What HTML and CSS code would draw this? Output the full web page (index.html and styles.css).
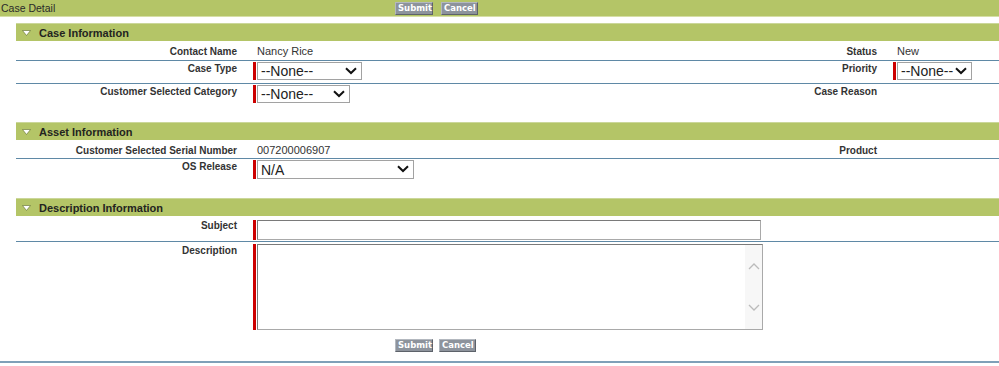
FILE: index.html
```html
<!DOCTYPE html>
<html lang="en">
<head>
    <meta charset="UTF-8">
    <title>Case Detail</title>
    <link rel="stylesheet" href="styles.css">
</head>
<body>
    <div class="topbar">
        <div class="page-title">Case Detail</div>
        <div class="buttons">
            <button class="btn" type="submit">Submit</button>
            <button class="btn" type="button">Cancel</button>
        </div>
    </div>

    <div class="content">
        <!-- Case Information -->
        <div class="section">
            <div class="sec-head">
                <svg class="twisty" width="9" height="6" viewBox="0 0 9 6"><path d="M0.5 0.5 L8.5 0.5 L4.5 5.5 Z" fill="#fff" stroke="#5d6b2a" stroke-width="0.6"/></svg>
                <span>Case Information</span>
            </div>
            <table class="detail">
                <colgroup><col class="c1"><col class="c2"><col class="c3"><col class="c4"></colgroup>
                <tr class="r-text">
                    <td class="lbl">Contact Name</td>
                    <td class="val">Nancy Rice</td>
                    <td class="lbl">Status</td>
                    <td class="val">New</td>
                </tr>
                <tr class="r-edit">
                    <td class="lbl">Case Type</td>
                    <td class="val">
                        <div class="req"><span class="bar"></span>
                            <div class="pick w-type">
                                <select><option>--None--</option></select>
                                <svg class="chev" width="12" height="8" viewBox="0 0 12 8"><path d="M1 1.2 L6 6 L11 1.2" fill="none" stroke="#111" stroke-width="2"/></svg>
                            </div>
                        </div>
                    </td>
                    <td class="lbl">Priority</td>
                    <td class="val">
                        <div class="req"><span class="bar"></span>
                            <div class="pick w-prio">
                                <select><option>--None--</option></select>
                                <svg class="chev" width="12" height="8" viewBox="0 0 12 8"><path d="M1 1.2 L6 6 L11 1.2" fill="none" stroke="#111" stroke-width="2"/></svg>
                            </div>
                        </div>
                    </td>
                </tr>
                <tr class="r-edit last">
                    <td class="lbl">Customer Selected Category</td>
                    <td class="val">
                        <div class="req"><span class="bar"></span>
                            <div class="pick w-cat">
                                <select><option>--None--</option></select>
                                <svg class="chev" width="12" height="8" viewBox="0 0 12 8"><path d="M1 1.2 L6 6 L11 1.2" fill="none" stroke="#111" stroke-width="2"/></svg>
                            </div>
                        </div>
                    </td>
                    <td class="lbl">Case Reason</td>
                    <td class="val"></td>
                </tr>
            </table>
        </div>

        <!-- Asset Information -->
        <div class="section">
            <div class="sec-head">
                <svg class="twisty" width="9" height="6" viewBox="0 0 9 6"><path d="M0.5 0.5 L8.5 0.5 L4.5 5.5 Z" fill="#fff" stroke="#5d6b2a" stroke-width="0.6"/></svg>
                <span>Asset Information</span>
            </div>
            <table class="detail">
                <colgroup><col class="c1"><col class="c2"><col class="c3"><col class="c4"></colgroup>
                <tr class="r-text short">
                    <td class="lbl">Customer Selected Serial Number</td>
                    <td class="val">007200006907</td>
                    <td class="lbl">Product</td>
                    <td class="val"></td>
                </tr>
                <tr class="r-edit last">
                    <td class="lbl">OS Release</td>
                    <td class="val">
                        <div class="req"><span class="bar"></span>
                            <div class="pick w-os">
                                <select><option>N/A</option></select>
                                <svg class="chev" width="12" height="8" viewBox="0 0 12 8"><path d="M1 1.2 L6 6 L11 1.2" fill="none" stroke="#111" stroke-width="2"/></svg>
                            </div>
                        </div>
                    </td>
                    <td class="lbl"></td>
                    <td class="val"></td>
                </tr>
            </table>
        </div>

        <!-- Description Information -->
        <div class="section">
            <div class="sec-head">
                <svg class="twisty" width="9" height="6" viewBox="0 0 9 6"><path d="M0.5 0.5 L8.5 0.5 L4.5 5.5 Z" fill="#fff" stroke="#5d6b2a" stroke-width="0.6"/></svg>
                <span>Description Information</span>
            </div>
            <table class="detail">
                <colgroup><col class="c1"><col class="c2"><col class="c3"><col class="c4"></colgroup>
                <tr class="r-subject">
                    <td class="lbl">Subject</td>
                    <td class="val" colspan="3">
                        <div class="req"><span class="bar"></span>
                            <input class="subject" type="text">
                        </div>
                    </td>
                </tr>
                <tr class="r-desc last">
                    <td class="lbl">Description</td>
                    <td class="val" colspan="3">
                        <div class="req"><span class="bar"></span>
                            <div class="area">
                                <textarea></textarea>
                                <div class="track">
                                    <svg width="12" height="8" viewBox="0 0 12 8"><path d="M1 7 L6 2 L11 7" fill="none" stroke="#bbb" stroke-width="1.3"/></svg>
                                    <svg width="12" height="8" viewBox="0 0 12 8"><path d="M1 1 L6 6 L11 1" fill="none" stroke="#bbb" stroke-width="1.3"/></svg>
                                </div>
                            </div>
                        </div>
                    </td>
                </tr>
            </table>
        </div>
    </div>

    <div class="bottombar">
        <div></div>
        <div class="buttons">
            <button class="btn" type="submit">Submit</button>
            <button class="btn" type="button">Cancel</button>
        </div>
    </div>
</body>
</html>
```

FILE: styles.css
```css
body {
    margin: 0;
    font-family: "Liberation Sans", Arial, sans-serif;
    color: #222;
    background: #fff;
}

/* header bar with title and buttons */
.topbar {
    display: grid;
    grid-template-columns: 395px auto;
    height: 16px;
    background: #b4c567;
    border-bottom: 1px solid #d6dfa6;
}
.page-title {
    font-size: 10.5px;
    line-height: 16px;
    padding-left: 1px;
    color: #2a2a2a;
}
.buttons {
    display: flex;
    gap: 8px;
    padding-top: 2px;
}
.btn {
    height: 13px;
    padding: 0 2px;
    margin: 0;
    font-family: "DejaVu Sans", Verdana, sans-serif;
    font-size: 8.5px;
    font-weight: bold;
    line-height: 11px;
    color: #fff;
    background: #8d939c;
    border: 1px solid;
    border-color: #b3b8bf #5d626a #5d626a #b3b8bf;
    cursor: pointer;
}
.btn:first-child { width: 38px; }
.btn:last-child { width: 37px; }

.content {
    margin: 6px 0 0 16px;
}
.section {
    margin-bottom: 15px;
}
.section:last-child {
    margin-bottom: 0;
}
.sec-head {
    display: flex;
    align-items: center;
    height: 17px;
    background: #b4c567;
    border-top: 1px solid #cbd79a;
    font-size: 11px;
    font-weight: bold;
    color: #23241f;
}
.twisty {
    margin: 0 8px 0 6px;
}

/* field table */
.detail {
    width: 100%;
    border-collapse: collapse;
    table-layout: fixed;
}
.c1 { width: 231px; }
.c3 { width: 140px; }
.c4 { width: 112px; }
.detail tr {
    border-bottom: 1px solid #5f89a6;
}
.detail tr.last {
    border-bottom: none;
}
.detail td {
    vertical-align: top;
    padding: 0;
}
.lbl {
    text-align: right;
    font-size: 10px;
    font-weight: bold;
    line-height: 13px;
    color: #333;
    padding-right: 10px !important;
}
.val {
    font-size: 11px;
    line-height: 13px;
    color: #333;
    padding-left: 10px !important;
}
.r-text td { padding-top: 4px; padding-bottom: 2px; }
.r-text.short td { padding-bottom: 1px; }
.r-edit td { padding-top: 1px; padding-bottom: 3px; }
.r-edit.last td { padding-bottom: 4px; }
.r-subject td { padding-top: 4px; padding-bottom: 1px; }
.r-subject td.lbl { padding-top: 3px; }
.r-desc td { padding-top: 2px; padding-bottom: 2px; }

/* required marker */
.req {
    display: flex;
    align-items: stretch;
    margin-left: -4px;
}
.bar {
    width: 3px;
    background: #c00;
    margin-right: 1px;
}

/* select boxes */
.pick {
    position: relative;
    height: 18px;
}
.pick select {
    appearance: none;
    -webkit-appearance: none;
    width: 100%;
    height: 100%;
    margin: 0;
    padding: 0 0 0 3px;
    border: 1px solid #a2a2a2;
    border-radius: 0;
    background: #fff;
    font-family: "Liberation Sans", Arial, sans-serif;
    font-size: 14px;
    color: #222;
}
.chev {
    position: absolute;
    right: 5px;
    top: 5px;
    pointer-events: none;
}
.w-type { width: 105px; }
.w-prio { width: 75px; }
.w-cat { width: 93px; }
.w-os { width: 157px; height: 19px; }

/* text inputs */
.subject {
    width: 504px;
    height: 20px;
    box-sizing: border-box;
    margin: 0;
    border: 1px solid #a9a9a9;
    border-top-color: #7a7a7a;
    border-left-color: #7a7a7a;
}
.area {
    display: flex;
    width: 506px;
    height: 86px;
    box-sizing: border-box;
    border: 1px solid #a9a9a9;
    border-top-color: #7a7a7a;
    border-left-color: #7a7a7a;
}
.area textarea {
    flex: 1;
    border: none;
    resize: none;
    outline: none;
    margin: 0;
}
.track {
    width: 17px;
    background: #f7f7f7;
    display: flex;
    flex-direction: column;
    align-items: center;
    justify-content: space-between;
    padding: 17px 0 17px;
}

.bottombar {
    display: grid;
    grid-template-columns: 395px auto;
    height: 25px;
    border-bottom: 2px solid #7fa0b8;
    margin-top: 4px;
}
.bottombar .buttons {
    padding-top: 3px;
    gap: 6px;
}
```
